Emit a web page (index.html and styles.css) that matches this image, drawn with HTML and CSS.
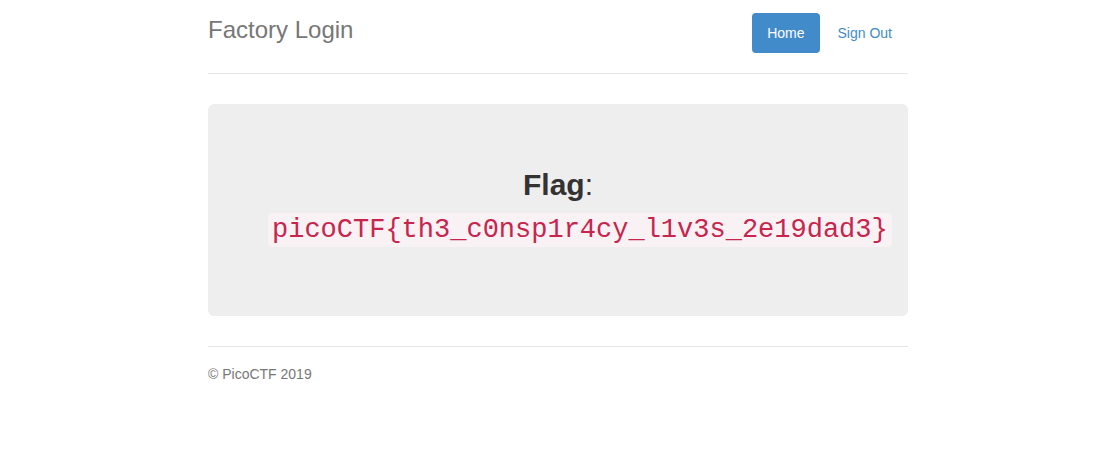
FILE: index.html
```html
<!DOCTYPE html>
<html>
<head>
<meta charset="utf-8">
<title>Factory Login</title>
<link rel="stylesheet" href="styles.css">
</head>
<body>
<div class="container">
  <div class="header">
    <h3 class="brand">Factory Login</h3>
    <ul class="nav">
      <li><a class="pill active" href="#">Home</a></li>
      <li><a class="pill" href="#">Sign Out</a></li>
    </ul>
  </div>
  <div class="jumbotron">
    <p class="flag"><b>Flag</b>:<br><code>picoCTF{th3_c0nsp1r4cy_l1v3s_2e19dad3}</code></p>
  </div>
  <footer class="footer">
    <p>&copy; PicoCTF 2019</p>
  </footer>
</div>
</body>
</html>
```
FILE: styles.css
```css
* { box-sizing: border-box; }
html, body { margin: 0; }
body {
  padding-top: 13px;
  font-family: "Liberation Sans", Arial, sans-serif;
  font-size: 14px;
  line-height: 20px;
  color: #333;
  background: #fff;
}
.container {
  width: 730px;
  margin: 0 auto;
  padding: 0 15px;
}
.header {
  display: flex;
  justify-content: space-between;
  align-items: flex-start;
  padding-bottom: 20px;
  border-bottom: 1px solid #e5e5e5;
  margin-bottom: 30px;
}
.brand {
  margin: 0;
  padding-bottom: 6px;
  font-size: 24px;
  font-weight: 500;
  line-height: 34px;
  color: #777;
}
.nav {
  display: flex;
  list-style: none;
  margin: 0 1px 0 0;
  padding: 0;
}
.nav li + li { margin-left: 3px; }
.pill {
  display: block;
  padding: 10px 15px;
  border-radius: 4px;
  color: #428bca;
  text-decoration: none;
}
.pill.active {
  background: #428bca;
  color: #fff;
}
.jumbotron {
  background: #eee;
  border-radius: 6px;
  padding: 48px 60px;
  text-align: center;
  margin-bottom: 30px;
}
.flag {
  margin: 12px 0 17px;
  font-size: 30px;
  line-height: 42px;
  color: #333;
}
code {
  font-family: "Liberation Mono", "Courier New", monospace;
  font-size: 90%;
  padding: 2px 4px;
  color: #c7254e;
  background: #f9f2f4;
  border-radius: 4px;
  white-space: nowrap;
}
.footer {
  border-top: 1px solid #e5e5e5;
  padding-top: 17px;
  color: #777;
}
.footer p { margin: 0 0 10px; }
```
